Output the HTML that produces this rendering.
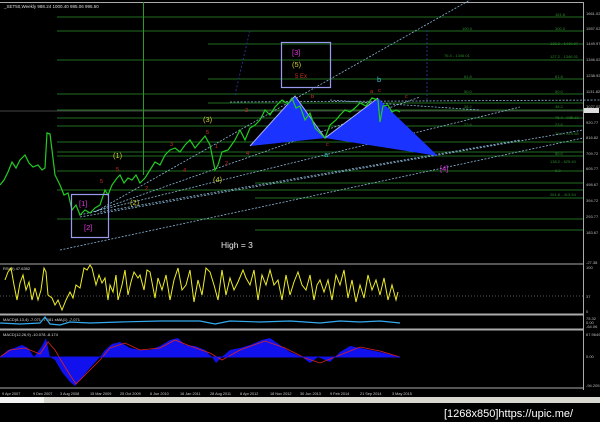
<!DOCTYPE html>
<html><head><style>
html,body{margin:0;padding:0;background:#000;width:600px;height:422px;overflow:hidden}
svg{display:block}
text{font-family:"Liberation Sans",sans-serif}
</style></head><body>
<svg width="600" height="422" viewBox="0 0 600 422" xmlns="http://www.w3.org/2000/svg">
<rect width="600" height="422" fill="#000"/>
<!-- borders -->
<line x1="0" y1="2.5" x2="583" y2="2.5" stroke="#aaa" stroke-width="1"/>
<line x1="583.5" y1="2" x2="583.5" y2="390" stroke="#aaa"/>
<text x="4" y="8" font-size="4.5" fill="#ddd">_SET50,Weekly  988.24 1000.40 985.06 995.50</text>
<!-- horizontal green levels -->
<g stroke="#1f6e1f" stroke-width="1">
<line x1="57" y1="17" x2="583" y2="17"/>
<line x1="57" y1="31" x2="583" y2="31"/>
<line x1="208" y1="44" x2="583" y2="44"/>
<line x1="57" y1="60" x2="583" y2="60"/>
<line x1="208" y1="79" x2="583" y2="79"/>
<line x1="57" y1="94" x2="583" y2="94"/>
<line x1="208" y1="103" x2="583" y2="103"/>
<line x1="57" y1="110" x2="583" y2="110"/>
<line x1="57" y1="118" x2="583" y2="118"/>
<line x1="57" y1="126" x2="583" y2="126"/>
<line x1="57" y1="142" x2="583" y2="142"/>
<line x1="57" y1="152" x2="583" y2="152"/>
<line x1="57" y1="156" x2="583" y2="156"/>
<line x1="57" y1="171" x2="583" y2="171"/>
<line x1="255" y1="183" x2="583" y2="183"/>
<line x1="57" y1="190" x2="583" y2="190"/>
<line x1="255" y1="198" x2="583" y2="198"/>
<line x1="57" y1="219" x2="583" y2="219"/>
<line x1="255" y1="230" x2="583" y2="230"/>
</g>
<line x1="0" y1="111" x2="583" y2="111" stroke="#888" stroke-width="0.6"/>
<line x1="143.5" y1="2" x2="143.5" y2="175" stroke="#2a9a2a"/>
<line x1="427" y1="30" x2="427" y2="100" stroke="#223388" stroke-dasharray="2,2"/>
<!-- right axis labels -->
<g font-size="4" fill="#bbb">
<text x="586" y="15">1661.02</text><text x="586" y="30">1557.02</text><text x="586" y="45">1449.97</text>
<text x="586" y="61">1346.02</text><text x="586" y="77">1238.92</text><text x="586" y="93">1131.82</text>
<text x="586" y="108">1027.02</text><text x="586" y="124">920.77</text><text x="586" y="139">816.82</text>
<text x="586" y="155">709.72</text><text x="586" y="170">605.77</text><text x="586" y="186">498.67</text><text x="586" y="202">394.72</text>
<text x="586" y="218">293.77</text><text x="586" y="234">183.67</text>
</g>
<rect x="584" y="108" width="15" height="5" fill="#ddd"/>
<g font-size="4" fill="#2c8a2c">
<text x="555" y="16">161.8</text><text x="462" y="30">100.0</text><text x="555" y="30">100.0</text>
<text x="550" y="45">138.2 - 1449.97</text><text x="444" y="57">76.4 - 1346.01</text><text x="550" y="58">127.2 - 1346.01</text>
<text x="464" y="78">61.8</text><text x="555" y="78">61.8</text><text x="464" y="93">50.0</text><text x="555" y="93">50.0</text>
<text x="464" y="108">38.2</text><text x="555" y="108">38.2</text><text x="555" y="119">76.4 - 935.13</text><text x="464" y="126">23.6</text>
<text x="555" y="126">23.6</text><text x="555" y="135">76.4 - 814.98</text><text x="555" y="155">50.0</text><text x="550" y="163">138.2 - 625.40</text><text x="555" y="172">0.0</text><text x="550" y="196">261.8 - 413.54</text>
</g>
<!-- trendlines -->
<g stroke="#8ab8d8" stroke-width="0.8" stroke-dasharray="2,1.5" fill="none">
<line x1="95" y1="212" x2="470" y2="0"/>
<line x1="90" y1="213" x2="420" y2="97"/>
<line x1="80" y1="215" x2="520" y2="107"/>
<line x1="80" y1="217" x2="583" y2="130"/>
<line x1="100" y1="212" x2="520" y2="140"/>
<line x1="60" y1="250" x2="583" y2="138"/>
<line x1="230" y1="102" x2="600" y2="100"/>
<line x1="330" y1="100" x2="480" y2="110"/>
</g>
<line x1="235" y1="95" x2="250" y2="30" stroke="#223388" stroke-dasharray="2,2"/>
<!-- harmonic -->
<polygon points="250,146 295,96 325,138" fill="#1a33ff"/>
<polygon points="325,138 378,98 393,113 438,156" fill="#1a33ff"/>
<polyline points="250,146 295,96 325,138 378,98" stroke="#aab0ff" fill="none" stroke-width="1"/>
<!-- price -->
<polyline fill="none" stroke="#22cc22" stroke-width="1.2" points="0,185 4,180 8,172 12,162 16,168 20,160 25,155 29,163 33,167 38,165 42,170 45,168 47,133 50,134 52,150 55,175 60,185 64,195 68,193 72,210 76,205 80,215 85,210 90,213 95,208 100,205 105,190 108,195 112,185 117,178 120,175 124,183 128,178 132,180 136,175 140,183 145,178 150,170 155,162 160,165 165,155 170,150 175,148 180,152 185,145 190,140 195,148 200,142 205,136 210,145 215,170 218,165 222,152 228,150 235,140 240,130 245,140 250,128 255,125 260,120 265,110 270,115 275,107 282,100 288,104 292,98 296,108 300,106 305,120 310,113 315,128 320,133 325,138 330,125 336,120 340,115 345,110 350,112 355,108 360,103 366,106 372,98 378,100 380,122 383,106 388,105 392,112 396,110 400,112"/>
<!-- boxes -->
<rect x="71.5" y="194.5" width="37" height="43" fill="none" stroke="#9999ee" stroke-width="1.2"/>
<rect x="281.5" y="42.5" width="49" height="45" fill="none" stroke="#9999ee" stroke-width="1.2"/>
<g font-size="7.5">
<text x="79" y="206" fill="#dd33dd">[1]</text>
<text x="84" y="230" fill="#dd33dd">[2]</text>
<text x="292" y="55" fill="#dd33dd">[3]</text>
<text x="292" y="67" fill="#cccc33">(5)</text>
<text x="295" y="78" fill="#cc3322" font-size="6">5  Ex</text>
<text x="440" y="171" fill="#dd33dd">[4]</text>
<text x="113" y="158" fill="#cccc33">(1)</text>
<text x="130" y="205" fill="#cccc33">(2)</text>
<text x="203" y="122" fill="#cccc33">(3)</text>
<text x="213" y="182" fill="#cccc33">(4)</text>
<text x="377" y="82" fill="#33bbcc">b</text>
<text x="324" y="157" fill="#33bbcc">a</text>
</g>
<g font-size="5.5" fill="#cc3322">
<text x="100" y="183">5</text><text x="116" y="171">5</text><text x="145" y="190">2</text><text x="170" y="146">3</text>
<text x="183" y="172">4</text><text x="206" y="134">5</text><text x="215" y="148">1</text><text x="245" y="112">3</text>
<text x="246" y="155">4</text><text x="225" y="165">2</text><text x="311" y="98">b</text><text x="370" y="93">a</text><text x="378" y="92">c</text><text x="405" y="98">c</text><text x="326" y="146">c</text>
</g>
<text x="221" y="248" font-size="8.5" fill="#eee">High = 3</text>
<!-- RSI panel -->
<line x1="0" y1="264" x2="583" y2="264" stroke="#aaa"/>
<line x1="0" y1="314" x2="583" y2="314" stroke="#aaa"/>
<line x1="0" y1="296" x2="583" y2="296" stroke="#555" stroke-dasharray="1,2"/>
<text x="3" y="270" font-size="4" fill="#ddd">RSI(9) 47.6352</text>
<g font-size="4" fill="#bbb"><text x="586" y="264">-27.38</text><text x="586" y="269">100</text><text x="586" y="298">37</text><text x="586" y="313">0</text></g>
<polyline fill="none" stroke="#eeee22" stroke-width="1" points="5,280 8,272 11,268 14,285 17,300 20,283 23,275 26,290 29,282 32,300 35,288 38,300 41,290 44,268 46,272 48,295 52,298 55,305 58,300 62,310 66,300 70,292 73,298 76,285 80,288 84,268 87,270 90,265 92,268 96,285 99,275 102,283 105,278 108,300 110,285 113,292 116,275 118,300 122,285 125,270 128,295 131,282 134,272 138,278 140,275 144,290 147,270 150,272 155,298 158,278 162,290 166,275 170,300 174,280 178,268 182,290 186,285 190,270 194,302 198,280 202,295 206,268 210,272 214,285 218,300 222,270 226,295 230,278 234,290 238,282 243,270 246,278 250,285 254,270 258,300 262,275 266,285 270,270 274,285 278,280 282,300 286,275 290,295 294,282 298,272 302,285 306,290 310,275 314,300 317,285 320,280 324,292 328,280 332,300 336,275 340,285 344,270 348,298 352,280 356,302 360,285 364,298 368,275 372,290 376,280 380,295 384,278 388,300 392,285 396,300 398,292"/>
<!-- small MACD panel -->
<line x1="0" y1="315" x2="583" y2="315" stroke="#aaa"/>
<line x1="0" y1="329" x2="583" y2="329" stroke="#aaa"/>
<text x="3" y="321" font-size="4" fill="#ddd">MACD(8,13,4) -7.071 -7.081   sMA(1) -7.071</text>
<polyline fill="none" stroke="#33aaee" stroke-width="1.2" points="0,323 20,324 40,323 45,317 50,324 60,325 70,322 90,323 120,322 160,321 200,321 215,324 230,321 260,322 290,321 320,323 340,321 360,322 380,321 400,323"/>
<g font-size="4" fill="#bbb"><text x="586" y="320">75.32</text><text x="586" y="324">0.00</text><text x="586" y="328">-64.06</text></g>
<!-- MACD panel -->
<line x1="0" y1="330" x2="583" y2="330" stroke="#aaa"/>
<line x1="0" y1="388" x2="583" y2="388" stroke="#aaa"/>
<text x="3" y="336" font-size="4" fill="#ddd">MACD(12,26,9) -10.078 -8.174</text>
<polygon fill="#1111ee" points="0,357 8,350 14,348 22,345 28,348 34,357 42,346 46,338 50,357 55,360 62,372 70,382 75,386 80,380 90,368 100,357 105,350 112,344 120,342 130,348 140,350 150,350 160,346 170,340 178,338 185,345 195,346 205,350 212,357 216,363 222,357 230,350 240,348 250,345 262,340 270,338 280,345 290,352 302,357 310,363 318,357 330,362 340,352 350,346 360,348 370,350 380,352 392,355 400,358 400,357"/>
<polyline fill="none" stroke="#dd2222" stroke-width="0.8" points="0,357 10,350 25,348 40,354 48,342 55,350 62,362 70,375 76,384 90,370 100,360 110,348 125,343 140,350 160,348 175,340 190,346 210,353 222,360 240,350 265,341 285,348 305,358 320,363 340,355 360,347 380,351 400,357"/>
<line x1="0" y1="357" x2="400" y2="357" stroke="#1111ee"/>
<g font-size="4" fill="#bbb"><text x="586" y="336">67.9649</text><text x="586" y="358">0.00</text><text x="586" y="387">-94.205</text></g>
<!-- date axis -->
<g font-size="3.8" fill="#ccc">
<text x="2" y="395">9 Apr 2007</text><text x="33" y="395">9 Dec 2007</text><text x="60" y="395">3 Aug 2008</text><text x="90" y="395">15 Mar 2009</text><text x="120" y="395">25 Oct 2009</text><text x="150" y="395">6 Jun 2010</text><text x="180" y="395">16 Jan 2011</text><text x="210" y="395">28 Aug 2011</text><text x="240" y="395">8 Apr 2012</text><text x="270" y="395">18 Nov 2012</text><text x="300" y="395">30 Jun 2013</text><text x="330" y="395">9 Feb 2014</text><text x="360" y="395">21 Sep 2014</text><text x="392" y="395">3 May 2015</text>
</g>
<rect x="0" y="397" width="600" height="6" fill="#d8d8d0"/>
<rect x="0" y="397" width="44" height="6" fill="#f4f4f4"/>
<text x="444" y="417" font-size="11" fill="#fff" font-family="Liberation Mono,monospace">[1268x850]https://upic.me/</text>
</svg>
</body></html>
